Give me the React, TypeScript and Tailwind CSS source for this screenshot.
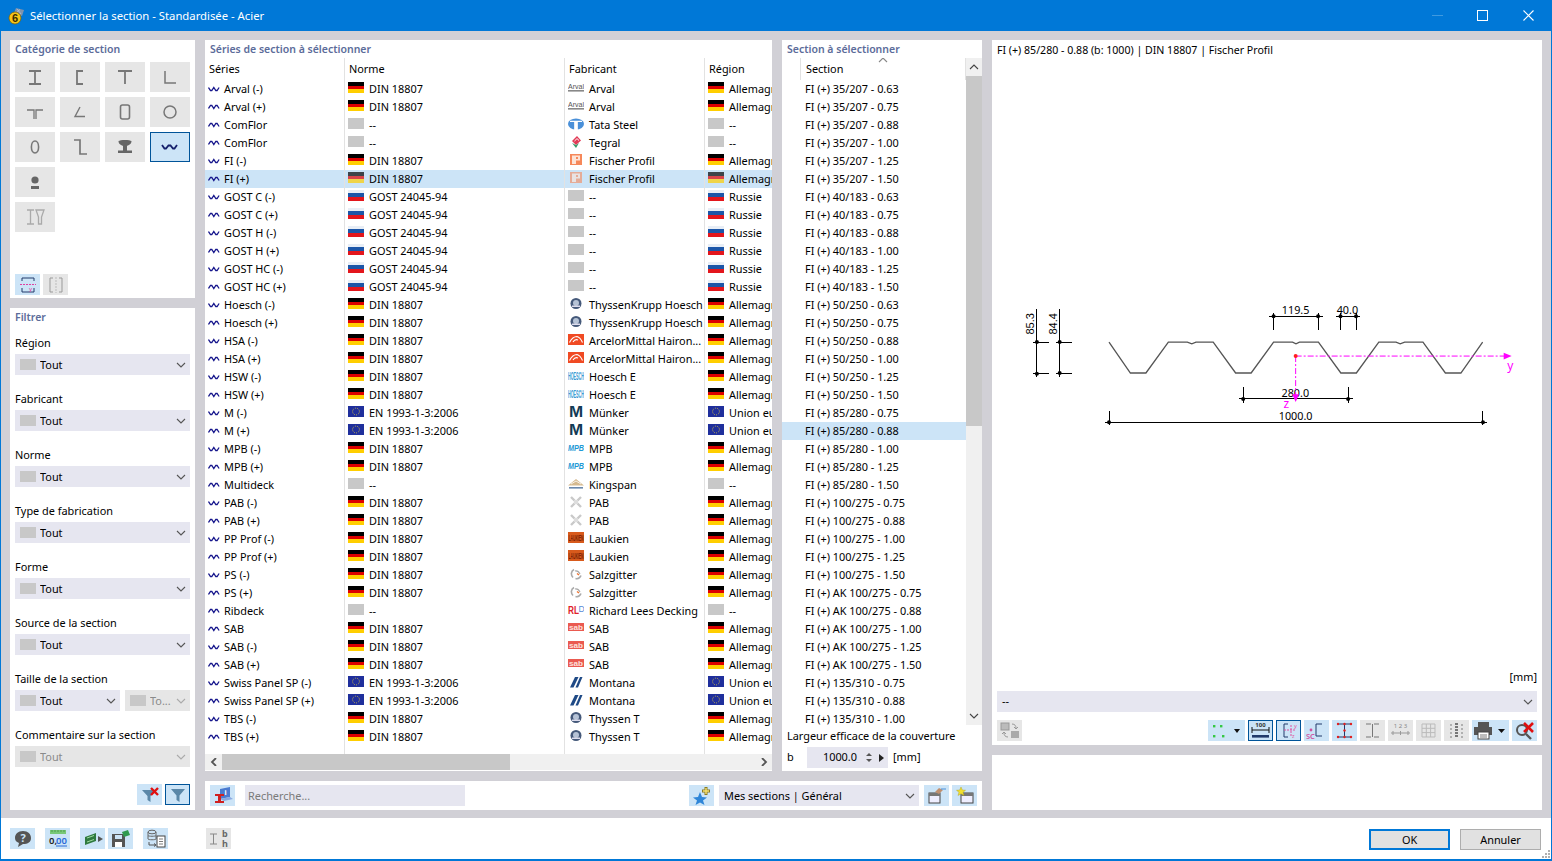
import React from 'react';

type FlagK = 'de' | 'ru' | 'eu' | 'no';
type Row = { n: string; w: 'm' | 'p'; norm: string; nf: FlagK; logo: string; fab: string; reg: string; rf: FlagK };

const DIN = 'DIN 18807', GOST = 'GOST 24045-94', EN = 'EN 1993-1-3:2006';
const pair = (n: string, norm: string, nf: FlagK, logo: string, fab: string, reg: string, rf: FlagK): Row[] => [
  { n: n + ' (-)', w: 'm', norm, nf, logo, fab, reg, rf },
  { n: n + ' (+)', w: 'p', norm, nf, logo, fab, reg, rf },
];
const one = (n: string, norm: string, nf: FlagK, logo: string, fab: string, reg: string, rf: FlagK): Row => ({ n, w: 'p', norm, nf, logo, fab, reg, rf });
const AL = 'Allemagne', RU = 'Russie', UE = 'Union européenne';
const rows: Row[] = [
  ...pair('Arval', DIN, 'de', 'arval', 'Arval', AL, 'de'),
  one('ComFlor', '--', 'no', 'tata', 'Tata Steel', '--', 'no'),
  one('ComFlor', '--', 'no', 'tegral', 'Tegral', '--', 'no'),
  ...pair('FI', DIN, 'de', 'fischer', 'Fischer Profil', AL, 'de'),
  ...pair('GOST C', GOST, 'ru', 'none', '--', RU, 'ru'),
  ...pair('GOST H', GOST, 'ru', 'none', '--', RU, 'ru'),
  ...pair('GOST HC', GOST, 'ru', 'none', '--', RU, 'ru'),
  ...pair('Hoesch', DIN, 'de', 'thyssen', 'ThyssenKrupp Hoesch', AL, 'de'),
  ...pair('HSA', DIN, 'de', 'arcelor', 'ArcelorMittal Hairon...', AL, 'de'),
  ...pair('HSW', DIN, 'de', 'hoesch', 'Hoesch E', AL, 'de'),
  ...pair('M', EN, 'eu', 'munker', 'Münker', UE, 'eu'),
  ...pair('MPB', DIN, 'de', 'mpb', 'MPB', AL, 'de'),
  one('Multideck', '--', 'no', 'kingspan', 'Kingspan', '--', 'no'),
  ...pair('PAB', DIN, 'de', 'pab', 'PAB', AL, 'de'),
  ...pair('PP Prof', DIN, 'de', 'laukien', 'Laukien', AL, 'de'),
  ...pair('PS', DIN, 'de', 'salz', 'Salzgitter', AL, 'de'),
  one('Ribdeck', '--', 'no', 'rld', 'Richard Lees Decking', '--', 'no'),
  one('SAB', DIN, 'de', 'sab', 'SAB', AL, 'de'),
  ...pair('SAB', DIN, 'de', 'sab', 'SAB', AL, 'de'),
  ...pair('Swiss Panel SP', EN, 'eu', 'montana', 'Montana', UE, 'eu'),
  ...pair('TBS', DIN, 'de', 'thyssen', 'Thyssen T', AL, 'de'),
];

const th = ['0.63', '0.75', '0.88', '1.00', '1.25', '1.50'];
const th5 = th.slice(1);
const sections: string[] = [
  ...th.map((t) => `FI (+) 35/207 - ${t}`),
  ...th.map((t) => `FI (+) 40/183 - ${t}`),
  ...th.map((t) => `FI (+) 50/250 - ${t}`),
  ...th5.map((t) => `FI (+) 85/280 - ${t}`),
  ...th5.map((t) => `FI (+) 100/275 - ${t}`),
  ...th5.map((t) => `FI (+) AK 100/275 - ${t}`),
  ...th5.slice(0, 3).map((t) => `FI (+) 135/310 - ${t}`),
];

function Flag({ k }: { k: FlagK }) {
  if (k === 'de')
    return (
      <span className="flex flex-col w-4 h-[11px] shrink-0 mb-[3px]">
        <span className="h-1 bg-black" />
        <span className="h-[3px] bg-[#dd0000]" />
        <span className="h-1 bg-[#ffce00]" />
      </span>
    );
  if (k === 'ru')
    return (
      <span className="flex flex-col w-4 h-[11px] shrink-0 mb-[3px]">
        <span className="h-[3px] bg-[#e8eef6]" />
        <span className="h-1 bg-[#1c56a8]" />
        <span className="h-1 bg-[#e3161c]" />
      </span>
    );
  if (k === 'eu')
    return (
      <svg width="16" height="11" viewBox="0 0 16 11" className="shrink-0 mb-[3px]">
        <rect width="16" height="11" fill="#1f2f9c" />
        <circle cx="8" cy="5.5" r="3.4" fill="none" stroke="#c9b64a" strokeWidth="1" strokeDasharray="1 1.1" />
      </svg>
    );
  return <span className="block w-4 h-[11px] bg-[#c8c8c8] shrink-0 mb-[3px]" />;
}

function Logo({ k }: { k: string }) {
  const box = 'relative w-4 h-[12px] shrink-0 mb-[3px] flex items-center justify-center overflow-hidden';
  const svg = 'shrink-0 mb-[3px]';
  switch (k) {
    case 'arval':
      return (
        <svg width="16" height="12" viewBox="0 0 16 12" className={svg}>
          <text x="0" y="6.5" fontSize="6.5" fill="#555" fontFamily="Liberation Sans, sans-serif" textLength="16" lengthAdjust="spacingAndGlyphs">Arval</text>
          <rect y="8" width="16" height="1.6" fill="#888" />
        </svg>
      );
    case 'tata':
      return (
        <svg width="16" height="12" viewBox="0 0 16 12" className={svg}>
          <ellipse cx="8" cy="6" rx="8" ry="5.5" fill="#4a90d9" />
          <path d="M2 3.4H14M6.8 3.4V11.5H9.2V3.4" stroke="#fff" strokeWidth="1.2" fill="#fff" />
        </svg>
      );
    case 'tegral':
      return (
        <svg width="16" height="12" viewBox="0 0 16 12" className={svg}>
          <path d="M9 0L13 4.5L8 9L4 5Z" fill="#e23a56" />
          <path d="M4 7L8 9L11 7L8 12Z" fill="#3a9a6a" />
          <path d="M6.5 5L9 2.6L11 4.5" stroke="#fff" fill="none" />
        </svg>
      );
    case 'fischer':
      return (
        <svg width="16" height="12" viewBox="0 0 16 12" className={svg}>
          <rect x="2" width="12" height="11" fill="#f6885a" />
          <path d="M4 1.5H12V6.5H8V10H4ZM8 3V5H10V3Z" fill="#fde3d6" fillRule="evenodd" />
        </svg>
      );
    case 'thyssen':
      return (
        <svg width="16" height="12" viewBox="0 0 16 12" className={svg}>
          <circle cx="8" cy="5.5" r="5.5" fill="#45597a" />
          <circle cx="8" cy="5" r="3" fill="#b6c3d6" />
          <rect x="4" y="7.5" width="8" height="1.5" fill="#dde" />
        </svg>
      );
    case 'arcelor':
      return (
        <svg width="16" height="12" viewBox="0 0 16 12" className={svg}>
          <rect width="16" height="11" fill="#f04a23" />
          <path d="M1.5 8.5C4 3.5 7 2.5 9 2.5C11 3 13 5 14.5 8.5M5 8C6.5 5.5 8 5 10 6" stroke="#fff" strokeWidth="1.1" fill="none" />
        </svg>
      );
    case 'hoesch':
      return (
        <svg width="16" height="12" viewBox="0 0 16 12" className={svg}>
          <text x="0" y="9.5" fontSize="10" fontWeight="700" fill="#3a9ad4" fontFamily="Liberation Sans, sans-serif" textLength="16" lengthAdjust="spacingAndGlyphs">HOESCH</text>
        </svg>
      );
    case 'munker':
      return (
        <span className={box}>
          <span className="text-[17px] font-bold text-[#123a55] leading-none [font-family:'Liberation_Sans',sans-serif]">M</span>
        </span>
      );
    case 'mpb':
      return (
        <svg width="16" height="12" viewBox="0 0 16 12" className={svg}>
          <text x="0" y="8.5" fontSize="9.5" fontWeight="700" fontStyle="italic" fill="#1f9ad6" fontFamily="Liberation Sans, sans-serif" textLength="16" lengthAdjust="spacingAndGlyphs">MPB</text>
        </svg>
      );
    case 'kingspan':
      return (
        <svg width="16" height="12" viewBox="0 0 16 12" className={svg}>
          <path d="M0 7.5L5 3.5L8 1L11 3.5L16 7.5Z" fill="#d5b98e" />
          <path d="M3 6L8 3L13 6" stroke="#fff" strokeWidth=".8" fill="none" />
          <rect x="1" y="9" width="14" height="1.6" fill="#6b88ac" />
        </svg>
      );
    case 'pab':
      return (
        <svg width="16" height="12" viewBox="0 0 16 12" className={svg}>
          <path d="M3 1L13 11M13 1L3 11" stroke="#c9c9c9" strokeWidth="2.4" />
          <rect x="6" y="4" width="4" height="4" fill="#ddd" />
        </svg>
      );
    case 'laukien':
      return (
        <svg width="16" height="12" viewBox="0 0 16 12" className={svg}>
          <rect width="16" height="11" fill="#d85a1c" />
          <text x="0.5" y="9" fontSize="9" fontWeight="700" fill="#7a2205" fontFamily="Liberation Sans, sans-serif" textLength="15" lengthAdjust="spacingAndGlyphs">LAUKIEN</text>
        </svg>
      );
    case 'salz':
      return (
        <svg width="16" height="12" viewBox="0 0 16 12" className={svg}>
          <path d="M6 1.5C3 3 2.5 7 5 9.5M13 7.5C12 10 9.5 11 7.5 10.5" stroke="#aaa" strokeWidth="1.6" fill="none" />
          <path d="M7 3C9 2.5 11 4 12 6" stroke="#aaa" strokeWidth="1.2" fill="none" />
          <path d="M9 5.5L11 7" stroke="#f0702a" strokeWidth="1.4" />
        </svg>
      );
    case 'rld':
      return (
        <svg width="16" height="12" viewBox="0 0 16 12" className={svg}>
          <text x="0" y="9.5" fontSize="10.5" fontWeight="700" fill="#e0202a" fontFamily="Liberation Sans, sans-serif" textLength="11" lengthAdjust="spacingAndGlyphs">RL</text>
          <text x="10.5" y="8" fontSize="8.5" fill="#5a8ad8" fontFamily="Liberation Sans, sans-serif">D</text>
        </svg>
      );
    case 'sab':
      return (
        <svg width="16" height="12" viewBox="0 0 16 12" className={svg}>
          <rect y="1" width="16" height="8" fill="#ea5a50" />
          <text x="1" y="7.5" fontSize="7" fontWeight="700" fill="#fde0dc" fontFamily="Liberation Sans, sans-serif" textLength="14" lengthAdjust="spacingAndGlyphs">sab</text>
        </svg>
      );
    case 'montana':
      return (
        <svg width="16" height="12" viewBox="0 0 16 12" className={svg}>
          <path d="M2 11.5L7 1H10.5L5.5 11.5ZM7.5 11.5L12 1H14.5L10 11.5Z" fill="#1f4a86" />
        </svg>
      );
    default:
      return <span className="block w-4 h-[11px] bg-[#c8c8c8] shrink-0 mb-[3px]" />;
  }
}

function Wave({ p, color = '#16168c', w = 12, h = 6 }: { p: boolean; color?: string; w?: number; h?: number }) {
  const d = p ? 'M0.5 4.5L2.5 1.5H3.8L5.8 4.5L7.8 1.5H9.1L11.1 4.5' : 'M0.5 1.5L2.5 4.5H3.8L5.8 1.5L7.8 4.5H9.1L11.1 1.5';
  return (
    <svg width={w} height={h} viewBox="0 0 12 6" className="shrink-0">
      <path d={d} fill="none" stroke={color} strokeWidth="1.3" />
    </svg>
  );
}

function Chevron({ c = '#555', dir = 'down' }: { c?: string; dir?: 'down' | 'up' | 'left' | 'right' }) {
  const d = { down: 'M1 1L5 5L9 1', up: 'M1 5L5 1L9 5', left: 'M6 0L2 4L6 8', right: 'M2 0L6 4L2 8' }[dir];
  const v = dir === 'left' || dir === 'right';
  return (
    <svg width={v ? 8 : 10} height={v ? 8 : 6} viewBox={v ? '0 0 8 8' : '0 0 10 6'} className="shrink-0">
      <path d={d} fill="none" stroke={c} strokeWidth={v ? 1.8 : 1.1} />
    </svg>
  );
}

function Heading({ children }: { children: React.ReactNode }) {
  return <div className="h-[18px] flex items-center pl-[5px] pt-[2px] text-[#5c6c9a] font-semibold text-[10.5px]">{children}</div>;
}

function Select({ label = 'Tout', disabled, className = '' }: { label?: string; disabled?: boolean; className?: string }) {
  return (
    <div className={`h-[21px] flex items-center pl-[5px] pr-[4px] ${disabled ? 'bg-[#e6e6e6] text-[#8a8a8a]' : 'bg-[#e6e6f0] text-black'} ${className}`}>
      <span className="block w-4 h-[11px] bg-[#c8c8c8] shrink-0" />
      <span className="ml-[4px] flex-1 truncate pt-[2px]">{label}</span>
      <Chevron c={disabled ? '#aaa' : '#555'} />
    </div>
  );
}

function Btn({ children, state = 'on', w = 25, h = 21 }: { children?: React.ReactNode; state?: 'on' | 'off' | 'sel'; w?: number; h?: number }) {
  const cls = state === 'on' ? 'bg-[#cce4f7]' : state === 'sel' ? 'bg-[#cce4f7] border border-[#005499]' : 'bg-[#e6e6e6]';
  return (
    <div className={`flex items-center justify-center shrink-0 box-border ${cls}`} style={{ width: w, height: h }}>
      {children}
    </div>
  );
}

const S = '#777';
const catIcons: React.ReactNode[] = [
  <path d="M14 9H26M14 22H26M20 9V22" stroke={S} strokeWidth="1.8" fill="none" />,
  <path d="M23 9H17V22H23" stroke={S} strokeWidth="1.8" fill="none" />,
  <path d="M13 9H27M20 9V22" stroke={S} strokeWidth="1.8" fill="none" />,
  <path d="M15 9V21H26" stroke={S} strokeWidth="1.5" fill="none" />,
  <path d="M12 13H19V22M28 13H21V22" stroke={S} strokeWidth="1.3" fill="none" />,
  <path d="M20 10L15 19.5H25" stroke={S} strokeWidth="1.4" fill="none" />,
  <rect x="15.5" y="8" width="9" height="14" rx="2" stroke={S} strokeWidth="1.6" fill="none" />,
  <circle cx="20" cy="15" r="6" stroke={S} strokeWidth="1.5" fill="none" />,
  <ellipse cx="20" cy="15" rx="3.6" ry="6" stroke={S} strokeWidth="1.6" fill="none" />,
  <path d="M14 8H20V22H27" stroke={S} strokeWidth="1.7" fill="none" />,
  <path d="M13.5 9C15 7.5 25 7.5 26.5 9C26.5 12 24 13 22 14V18.5H27V21H13V18.5H18V14C16 13 13.5 12 13.5 9Z" fill="#666" />,
  <path d="M12 13L14.5 16.5H16L18.5 13.5H20.5L23 16.5H24.5L27 13" stroke="#16206c" strokeWidth="1.8" fill="none" />,
  <g><circle cx="20" cy="13" r="3.6" fill="#666" /><rect x="16" y="19" width="8" height="3" fill="#666" /></g>,
  <g fill="none" stroke="#aaa" strokeWidth="1.3"><path d="M12 8H19M12 22H19M15.5 8V22M21 8H29L26.5 15V22H23.5V15Z" /></g>,
];

function Cat({ i, sel, className = '' }: { i: number; sel?: boolean; className?: string }) {
  return (
    <div className={`w-10 h-[30px] box-border ${sel ? 'bg-[#cce4f7] border border-[#005499]' : 'bg-[#e6e6e6]'} ${className}`}>
      <svg width={sel ? 38 : 40} height={sel ? 28 : 30} viewBox={sel ? '1 1 38 28' : '0 0 40 30'}>{catIcons[i]}</svg>
    </div>
  );
}

function Dim() {
  const X = (z: number) => 1000 + z * 0.345 - 0.7 - 992;
  const Y = (z: number) => 290 + z * 0.332 - 60;
  const ln = (a: number, b: number, c: number, d: number, k: string) => (
    <line key={k} x1={X(a)} y1={Y(b)} x2={X(c)} y2={Y(d)} stroke="#000" strokeWidth="1" shapeRendering="crispEdges" />
  );
  const dot = (a: number, b: number) => <circle key={`d${a}-${b}`} cx={X(a)} cy={Y(b)} r="2" fill="#000" />;
  const period = [318, 157, 380, 250, 425, 250, 490, 157, 545, 157, 558, 162, 570, 157, 620, 157, 685, 250, 730, 250, 795, 157, 850, 157, 860, 162, 870, 157, 925, 157, 990, 250, 1035, 250, 1100, 157, 1150, 157, 1162, 162, 1175, 157, 1228, 157, 1293, 250, 1338, 250, 1401, 157];
  let pts = '';
  for (let i = 0; i < period.length; i += 2) pts += `${X(period[i])},${Y(period[i + 1])} `;
  const t = (s: string, x: number, y: number) => (
    <text key={s} x={X(x)} y={Y(y)} textAnchor="middle" dominantBaseline="central" fontSize="10.8" fill="#000">{s}</text>
  );
  return (
    <svg className="flex-1 w-full min-h-0" viewBox="0 0 550 610" style={{ fontFamily: "'Noto Sans', sans-serif" }}>
      <polyline points={pts} fill="none" stroke="#555" strokeWidth="1.3" />
      {ln(109, 58, 109, 262, 'a')}{ln(97, 157, 145, 157, 'b')}{ln(97, 252, 145, 252, 'c')}
      {ln(175, 58, 175, 262, 'd')}{ln(163, 157, 212, 157, 'e')}{ln(163, 250, 212, 250, 'f')}
      {dot(109, 157)}{dot(109, 252)}{dot(175, 157)}{dot(175, 250)}
      <text transform={`translate(${X(88)} ${Y(102)}) rotate(-90)`} textAnchor="middle" dominantBaseline="central" fontSize="11" style={{ fontFamily: "'Liberation Sans', sans-serif" }}>85.3</text>
      <text transform={`translate(${X(155)} ${Y(102)}) rotate(-90)`} textAnchor="middle" dominantBaseline="central" fontSize="11" style={{ fontFamily: "'Liberation Sans', sans-serif" }}>84.4</text>
      {ln(782, 79, 937, 79, 'g')}{ln(795, 68, 795, 120, 'h')}{ln(924, 68, 924, 120, 'i')}{dot(795, 79)}{dot(924, 79)}{t('119.5', 859, 58)}
      {ln(977, 79, 1045, 79, 'j')}{ln(989, 68, 989, 120, 'k')}{ln(1034, 68, 1034, 120, 'l')}{dot(989, 79)}{dot(1034, 79)}{t('40.0', 1009, 58)}
      {ln(695, 328, 1025, 328, 'm')}{ln(707, 291, 707, 340, 'n')}{ln(1011, 291, 1011, 340, 'o')}{dot(707, 328)}{dot(1011, 328)}{t('280.0', 858, 310)}
      {ln(305, 398, 1414, 398, 'p')}{ln(318, 363, 318, 408, 'q')}{ln(1402, 363, 1402, 408, 'r')}{dot(318, 398)}{dot(1402, 398)}{t('1000.0', 859, 379)}
      <line x1={X(859)} y1={Y(199)} x2={X(1465)} y2={Y(199)} stroke="#ff00ff" strokeDasharray="6 2 2 2" />
      <line x1={X(859)} y1={Y(199)} x2={X(859)} y2={Y(318)} stroke="#ff00ff" strokeDasharray="6 2 2 2" />
      <path d={`M${X(1462)} ${Y(189)}L${X(1485)} ${Y(199)}L${X(1462)} ${Y(209)}Z`} fill="#ff00ff" />
      <path d={`M${X(849)} ${Y(314)}L${X(869)} ${Y(314)}L${X(859)} ${Y(337)}Z`} fill="#ff00ff" />
      <circle cx={X(859)} cy={Y(199)} r="2" fill="#ff2020" />
      <text x={X(1481)} y={Y(228)} textAnchor="middle" dominantBaseline="central" fontSize="12" fill="#ff00ff">y</text>
      <text x={X(832)} y={Y(342)} textAnchor="middle" dominantBaseline="central" fontSize="12" fill="#ff00ff">z</text>
    </svg>
  );
}

export default function App() {
  const sep = 'border-r border-[#e2e2e2]';
  return (
    <div className="w-[1552px] h-[861px] flex flex-col bg-[#d1d0d6] border-x border-b-2 border-[#0078d7] box-border overflow-hidden text-[10.9px] text-black [font-family:'Noto_Sans',sans-serif]">
      {/* Title bar */}
      <div className="h-[31px] shrink-0 bg-[#0078d7] flex items-center text-white text-[11.3px] -mx-px">
        <svg width="18" height="18" viewBox="0 0 18 18" className="ml-[8px]">
          <path d="M8 1L16 3L14 9L6 6Z" fill="#7f93ad" />
          <path d="M9 2L13 7M12 2.5L8 6" stroke="#c8d4e2" strokeWidth=".6" />
          <circle cx="7" cy="11" r="6" fill="#f5c518" stroke="#7a5c00" strokeWidth=".7" />
          <text x="7" y="15" textAnchor="middle" fontSize="11" fontWeight="700" fill="#3a2a00" fontFamily="Liberation Sans, sans-serif">6</text>
        </svg>
        <span className="ml-[4px] pt-px">Sélectionner la section - Standardisée - Acier</span>
        <div className="ml-auto flex items-center">
          <div className="w-[11px] h-px bg-[#3f9ae0] mr-[34px]" />
          <div className="w-[11px] h-[11px] border border-white mr-[35px]" />
          <svg width="11" height="11" viewBox="0 0 11 11" className="mr-[18px]"><path d="M.5.5L10.5 10.5M10.5.5L.5 10.5" stroke="#fff" strokeWidth="1.1" /></svg>
        </div>
      </div>

      {/* Body */}
      <div className="flex-1 min-h-0 flex gap-[10px] pl-[9px] pr-[9px] pt-[9px] pb-2">
        {/* Left column */}
        <div className="w-[185px] shrink-0 flex flex-col gap-[10px]">
          <div className="h-[258px] shrink-0 bg-white flex flex-col">
            <Heading>Catégorie de section</Heading>
            <div className="grid grid-cols-[40px_40px_40px_40px] gap-[5px] pl-[5px] pt-[4px] content-start">
              {catIcons.map((_, i) => (
                <Cat key={i} i={i} sel={i === 11} className={i === 13 ? 'col-start-1' : ''} />
              ))}
            </div>
            <div className="mt-auto flex gap-[3px] pl-[5px] pb-[3px]">
              <Btn>
                <svg width="20" height="18" viewBox="0 0 20 18"><path d="M4 5V2H16V5M4 12V16H16V12" stroke="#223a6a" fill="none" /><path d="M2 8.5H18" stroke="#e040a0" strokeDasharray="2 1" /><text x="11" y="15" fontSize="6" fill="#e040a0">y</text></svg>
              </Btn>
              <Btn state="off">
                <svg width="20" height="18" viewBox="0 0 20 18"><path d="M7 2H4V16H7M13 2H16V16H13" stroke="#999" fill="none" /><path d="M10 1V17" stroke="#bbb" strokeDasharray="2 1" /></svg>
              </Btn>
            </div>
          </div>

          <div className="flex-1 bg-white flex flex-col">
            <Heading>Filtrer</Heading>
            <div className="flex flex-col gap-[15px] px-[5px] mt-[8px]">
              {['Région', 'Fabricant', 'Norme', 'Type de fabrication', 'Forme', 'Source de la section'].map((l) => (
                <div key={l}>
                  <div className="h-5 flex items-center pb-[2px]">{l}</div>
                  <Select />
                </div>
              ))}
              <div>
                <div className="h-5 flex items-center pb-[2px]">Taille de la section</div>
                <div className="flex gap-[5px]">
                  <Select className="w-[105px]" />
                  <Select className="w-[65px]" label="To..." disabled />
                </div>
              </div>
              <div>
                <div className="h-5 flex items-center pb-[2px]">Commentaire sur la section</div>
                <Select disabled />
              </div>
            </div>
            <div className="mt-auto flex justify-end gap-[3px] pr-[5px] pb-[5px]">
              <Btn>
                <svg width="22" height="18" viewBox="0 0 22 18"><path d="M3 4H17L11.5 10V16L8.5 14V10Z" fill="#5a87a8" /><path d="M12 2L19 9M19 2L12 9" stroke="#e01010" strokeWidth="2.4" /></svg>
              </Btn>
              <Btn state="sel">
                <svg width="18" height="16" viewBox="0 0 18 16"><path d="M2 2H16L10.5 8.5V15L7.5 13V8.5Z" fill="#5a87a8" /></svg>
              </Btn>
            </div>
          </div>
        </div>

        {/* Centre column */}
        <div className="w-[777px] shrink-0 flex flex-col gap-[10px]">
          <div className="flex-1 min-h-0 flex gap-[10px]">
            {/* Series table */}
            <div className="w-[567px] shrink-0 bg-white flex flex-col overflow-hidden">
              <Heading>Séries de section à sélectionner</Heading>
              <div className="flex-1 min-h-0 flex flex-col">
                <div className="h-[22px] shrink-0 flex">
                  <div className={`w-[140px] pl-[4px] flex items-center ${sep}`}>Séries</div>
                  <div className={`w-[220px] pl-[4px] flex items-center ${sep}`}>Norme</div>
                  <div className={`w-[140px] pl-[4px] flex items-center ${sep}`}>Fabricant</div>
                  <div className="flex-1 pl-[4px] flex items-center">Région</div>
                </div>
                {rows.map((r, i) => {
                  const sel = i === 5;
                  return (
                    <div key={i} className={`h-[18px] shrink-0 flex whitespace-nowrap ${sel ? 'bg-[#cce4f7]' : ''}`}>
                      <div className={`w-[140px] pl-[3px] flex items-center gap-[4px] ${sep}`}>
                        <Wave p={r.w === 'p'} />
                        <span>{r.n}</span>
                      </div>
                      <div className={`w-[220px] pl-[3px] flex items-center gap-[5px] ${sep}`}>
                        <span className={sel ? 'flex opacity-70' : 'flex'}><Flag k={r.nf} /></span>
                        <span>{r.norm}</span>
                      </div>
                      <div className={`w-[140px] pl-[3px] flex items-center gap-[5px] overflow-hidden ${sep}`}>
                        <span className={sel ? 'flex opacity-60' : 'flex'}><Logo k={r.logo} /></span>
                        <span>{r.fab}</span>
                      </div>
                      <div className="flex-1 pl-[3px] flex items-center gap-[5px] overflow-hidden">
                        <span className={sel ? 'flex opacity-70' : 'flex'}><Flag k={r.rf} /></span>
                        <span>{r.reg}</span>
                      </div>
                    </div>
                  );
                })}
                <div className="flex-1 flex">
                  <div className={`w-[140px] ${sep}`} />
                  <div className={`w-[220px] ${sep}`} />
                  <div className={`w-[140px] ${sep}`} />
                </div>
              </div>
              <div className="h-4 mb-px shrink-0 bg-[#f0f0f0] flex items-center">
                <div className="w-[17px] flex justify-center"><Chevron dir="left" c="#555" /></div>
                <div className="w-[288px] h-full bg-[#c8c8c8]" />
                <div className="ml-auto w-[17px] flex justify-center"><Chevron dir="right" c="#555" /></div>
              </div>
            </div>

            {/* Section list */}
            <div className="w-[200px] shrink-0 bg-white flex flex-col">
              <Heading>Section à sélectionner</Heading>
              <div className="h-[669px] shrink-0 flex overflow-hidden">
                <div className="w-[184px] shrink-0 flex flex-col">
                  <div className="h-[22px] shrink-0 flex relative">
                    <div className="w-[19px] border-r border-[#e2e2e2]" />
                    <div className="flex-1 border-r border-[#e2e2e2] pl-[5px] flex items-center">Section</div>
                    <div className="absolute left-[96px] top-[-1px]"><Chevron dir="up" c="#888" /></div>
                  </div>
                  {sections.map((s, i) => (
                    <div key={i} className={`h-[18px] shrink-0 pl-[23px] flex items-center whitespace-nowrap ${i === 19 ? 'bg-[#cce4f7]' : ''}`}>{s}</div>
                  ))}
                </div>
                <div className="w-4 h-[667px] shrink-0 bg-[#f0f0f0] flex flex-col">
                  <div className="h-[18px] flex items-center justify-center"><Chevron dir="up" c="#444" /></div>
                  <div className="h-[350px] bg-[#c8c8c8]" />
                  <div className="mt-auto h-[18px] flex items-center justify-center"><Chevron dir="down" c="#444" /></div>
                </div>
              </div>
              <div className="h-[18px] shrink-0 pl-[5px] flex items-center">Largeur efficace de la couverture</div>
              <div className="mt-[2px] h-[21px] shrink-0 flex items-center pl-[5px]">
                <span className="w-[20px]">b</span>
                <div className="w-[81px] h-full bg-[#e6e6f0] flex items-center">
                  <span className="w-[50px] text-right">1000.0</span>
                  <svg width="8" height="13" viewBox="0 0 8 13" className="ml-[8px]"><path d="M1 5L4 2L7 5Z" fill="#555" /><path d="M1 8L4 11L7 8Z" fill="#555" /></svg>
                  <svg width="5" height="8" viewBox="0 0 5 8" className="ml-[6px]"><path d="M0 0L5 4L0 8Z" fill="#222" /></svg>
                </div>
                <span className="ml-[5px]">[mm]</span>
              </div>
            </div>
          </div>

          {/* Search bar */}
          <div className="h-[29px] shrink-0 bg-white flex items-center pl-[5px] pr-[5px]">
            <Btn>
              <svg width="22" height="20" viewBox="0 0 22 20">
                <path d="M8 3L18 1V11L8 13Z" fill="#4a7ad0" />
                <path d="M8 13L12 15L21 13L18 11Z" fill="#8aa8e0" />
                <text x="12.5" y="8.5" fontSize="7" fontWeight="700" fill="#fff">i</text>
                <path d="M3 8H12V10H9V15H12V17H3V15H6V10H3Z" fill="#d02020" />
              </svg>
            </Btn>
            <div className="ml-[10px] w-[220px] h-[21px] bg-[#e6e6f0] flex items-center pl-[3px] pt-[2px] text-[#7a7a7a]">Recherche...</div>
            <div className="ml-auto flex items-center gap-[5px]">
              <Btn>
                <svg width="22" height="20" viewBox="0 0 22 20">
                  <path d="M9 6L11 11L16 11.5L12 14.5L13.5 19L9 16.5L4.5 19L6 14.5L2 11.5L7 11Z" fill="#2f86d8" />
                  <path d="M15 1V9M11 5H19" stroke="#8a7a20" strokeWidth="3" /><path d="M15 2V8M12 5H18" stroke="#f4e070" strokeWidth="1.4" />
                </svg>
              </Btn>
              <div className="w-[200px] h-[21px] bg-[#e6e6f0] flex items-center pl-[5px] pr-[4px]">
                <span className="flex-1 pt-[2px]">Mes sections | Général</span>
                <Chevron />
              </div>
              <div className="flex gap-[3px]">
                <Btn>
                  <svg width="20" height="19" viewBox="0 0 20 19"><rect x="2" y="7" width="11" height="10" fill="#eef" stroke="#444" /><rect x="2" y="7" width="11" height="3" fill="#777" /><path d="M8 6L12 2L16 4L12 8Z" fill="#c09070" /><path d="M14 3H19" stroke="#4a90d9" /></svg>
                </Btn>
                <Btn>
                  <svg width="20" height="19" viewBox="0 0 20 19"><rect x="6" y="7" width="12" height="10" fill="#eef" stroke="#444" /><rect x="6" y="7" width="12" height="3" fill="#777" /><path d="M6 1L7.3 4L10.5 4.3L8 6.3L9 9.5L6 7.8L3 9.5L4 6.3L1.5 4.3L4.7 4Z" fill="#f2e030" stroke="#a89a10" strokeWidth=".4" /></svg>
                </Btn>
              </div>
            </div>
          </div>
        </div>

        {/* Right column */}
        <div className="w-[550px] shrink-0 flex flex-col gap-[10px]">
          <div className="flex-1 min-h-0 bg-white flex flex-col">
            <div className="h-5 shrink-0 pl-[5px] pt-[2px] flex items-center text-[10.6px]">FI (+) 85/280 - 0.88 (b: 1000) | DIN 18807 | Fischer Profil</div>
            <Dim />
            <div className="h-[14px] shrink-0 flex items-center justify-end pr-[5px]">[mm]</div>
            <div className="mt-[7px] mx-[5px] h-[21px] shrink-0 bg-[#e6e6f0] flex items-center pl-[5px] pr-[4px]">
              <span className="flex-1">--</span>
              <Chevron />
            </div>
            <div className="mt-2 mb-1 mx-[5px] h-[21px] shrink-0 flex items-center">
              <Btn state="off">
                <svg width="22" height="19" viewBox="0 0 22 19"><rect x="2" y="2" width="8" height="7" fill="#bbb" stroke="#999" /><rect x="12" y="10" width="8" height="7" fill="#aaa" /><path d="M13 3C16 3 17 5 17 7M15 6L17 8L19 6M9 16C6 16 5 14 5 12M3 13L5 11L7 13" stroke="#999" fill="none" /></svg>
              </Btn>
              <div className="ml-auto flex gap-[3px]">
                <Btn w={37}>
                  <svg width="37" height="21" viewBox="0 0 37 21">
                    <g fill="#35c845"><rect x="5" y="5" width="2.4" height="2.4" /><rect x="12" y="5" width="2.4" height="2.4" /><rect x="5" y="15" width="2.4" height="2.4" /><rect x="14" y="15" width="2.4" height="2.4" /></g>
                    <path d="M26 9H32L29 13Z" fill="#111" />
                  </svg>
                </Btn>
                <Btn state="sel">
                  <svg width="23" height="19" viewBox="0 0 23 19"><text x="11.5" y="6" textAnchor="middle" fontSize="6" fontWeight="700" fill="#333">100</text><path d="M3 9H20M3 6V12M20 6V12" stroke="#111" /><rect x="3" y="14" width="17" height="2.6" fill="#223a6a" /></svg>
                </Btn>
                <Btn state="sel">
                  <svg width="23" height="19" viewBox="0 0 23 19"><path d="M11 3H7V16H11" stroke="#223a6a" fill="none" /><path d="M7 9H18M14 4V15" stroke="#e050a0" strokeDasharray="2 1" /><text x="17" y="7" fontSize="5.5" fill="#e050a0">y</text><text x="15" y="17" fontSize="5.5" fill="#e050a0">z</text></svg>
                </Btn>
                <Btn>
                  <svg width="25" height="21" viewBox="0 0 25 21"><path d="M18 4H12V16H18" stroke="#223a6a" fill="none" /><circle cx="7" cy="10" r="1.4" fill="#d050a0" /><text x="2" y="19" fontSize="7.5" fontWeight="600" fill="#d050a0">SC</text></svg>
                </Btn>
                <Btn>
                  <svg width="25" height="21" viewBox="0 0 25 21"><path d="M6 4H19M6 17H19M12.5 4V17" stroke="#223a6a" /><g fill="#e02020"><circle cx="6" cy="4" r="1.2" /><circle cx="19" cy="4" r="1.2" /><circle cx="12.5" cy="4" r="1.2" /><circle cx="6" cy="17" r="1.2" /><circle cx="19" cy="17" r="1.2" /><circle cx="12.5" cy="17" r="1.2" /><circle cx="12.5" cy="10.5" r="1.2" /></g></svg>
                </Btn>
                <Btn state="off">
                  <svg width="25" height="21" viewBox="0 0 25 21"><path d="M6 4H11M14 4H19M6 17H11M14 17H19M12.5 4V17" stroke="#777" /></svg>
                </Btn>
                <Btn state="off">
                  <svg width="25" height="21" viewBox="0 0 25 21"><text x="12.5" y="8" textAnchor="middle" fontSize="6" fill="#888">1 2 3</text><path d="M3 13H22M5 11V15M12.5 11V15M20 11V15" stroke="#999" /></svg>
                </Btn>
                <Btn state="off">
                  <svg width="25" height="21" viewBox="0 0 25 21"><path d="M6 4H19V17H6ZM6 8.3H19M6 12.6H19M10.3 4V17M14.6 4V17" stroke="#bbb" fill="none" /></svg>
                </Btn>
                <Btn state="off">
                  <svg width="25" height="21" viewBox="0 0 25 21"><path d="M12.5 3V18" stroke="#777" strokeWidth="3" strokeDasharray="2 1" /><path d="M7 4V18M18 4V18" stroke="#999" strokeWidth="1.4" strokeDasharray="2 2" /></svg>
                </Btn>
                <Btn w={37}>
                  <svg width="37" height="21" viewBox="0 0 37 21"><rect x="6" y="2" width="11" height="5" fill="#555" /><rect x="2" y="7" width="18" height="8" fill="#555" /><rect x="6" y="12" width="11" height="7" fill="#fff" stroke="#444" /><path d="M8 15H15M8 17H15" stroke="#444" strokeWidth=".7" /><path d="M26 9H33L29.5 13Z" fill="#111" /></svg>
                </Btn>
                <Btn>
                  <svg width="25" height="21" viewBox="0 0 25 21"><circle cx="10" cy="10" r="5" fill="none" stroke="#555" strokeWidth="2" /><path d="M14 14L19 19" stroke="#555" strokeWidth="2.4" /><path d="M12 3L21 12M21 3L12 12" stroke="#e01010" strokeWidth="2.6" /></svg>
                </Btn>
              </div>
            </div>
          </div>
          <div className="h-[55px] shrink-0 bg-white" />
        </div>
      </div>

      {/* Footer */}
      <div className="h-[41px] shrink-0 bg-white flex items-center pl-[9px] relative">
        <Btn>
          <svg width="20" height="18" viewBox="0 0 20 18"><path d="M10 1C15 1 18 4 18 8C18 12 15 14 10 14L5 17L6 13C3 12 2 10 2 8C2 4 5 1 10 1Z" fill="#555" /><text x="10" y="12" textAnchor="middle" fontSize="11" fontWeight="700" fill="#cce4f7">?</text></svg>
        </Btn>
        <div className="ml-[10px]"><Btn>
          <svg width="20" height="19" viewBox="0 0 20 19"><rect x="2" y="1" width="16" height="4" fill="#78c878" /><path d="M4 1V3M7 1V3M10 1V3M13 1V3M16 1V3" stroke="#3a8a3a" strokeWidth=".7" /><text x="1" y="15" fontSize="9.5" fontWeight="600" fill="#222">0,</text><text x="8" y="15" fontSize="9.5" fontWeight="600" fill="#2a6ad8">00</text><path d="M8 17H19" stroke="#2a6ad8" /></svg>
        </Btn></div>
        <div className="ml-[10px] flex gap-[3px]">
          <Btn>
            <svg width="22" height="18" viewBox="0 0 22 18"><path d="M3 7L14 3V11L3 15Z" fill="#2f7a3f" /><path d="M5 8L12 5.5M5 12L12 9.5" stroke="#a0dca0" /><path d="M16 6L21 9L16 12Z" fill="#555" /></svg>
          </Btn>
          <Btn>
            <svg width="22" height="19" viewBox="0 0 22 19"><path d="M2 5H13L15 7V18H2Z" fill="#555" /><rect x="5" y="6" width="7" height="4" fill="#cce4f7" /><rect x="5" y="13" width="7" height="5" fill="#fff" /><path d="M12 3L18 1L20 6L14 8Z" fill="#2f9a4f" /></svg>
          </Btn>
        </div>
        <div className="ml-[10px]"><Btn>
          <svg width="22" height="19" viewBox="0 0 22 19"><ellipse cx="7" cy="3" rx="4" ry="1.8" fill="none" stroke="#666" /><path d="M3 3V10C3 11 11 11 11 10V3M3 6.5C3 7.5 11 7.5 11 6.5" fill="none" stroke="#666" /><rect x="12" y="7" width="8" height="11" fill="#fff" stroke="#444" /><path d="M14 10H18M14 12.5H18M14 15H18" stroke="#444" strokeWidth=".7" /><path d="M4 13V16H10M9 14.5L11 16L9 17.5" stroke="#555" fill="none" /></svg>
        </Btn></div>
        <div className="ml-[38px]"><Btn state="off">
          <svg width="24" height="20" viewBox="0 0 24 20"><path d="M3 5H10M3 15H10M6.5 5V15" stroke="#888" /><text x="15" y="8" fontSize="9" fontWeight="700" fill="#666">b</text><text x="15" y="18" fontSize="9" fontWeight="700" fill="#666">h</text></svg>
        </Btn></div>
        <div className="ml-auto flex gap-[10px] pr-[10px] pt-px">
          <div className="w-[81px] h-[21px] bg-[#e1e1e1] border-2 border-[#0078d7] box-border flex items-center justify-center pt-[2px]">OK</div>
          <div className="w-[81px] h-[21px] bg-[#e1e1e1] border border-[#adadad] box-border flex items-center justify-center pt-[2px]">Annuler</div>
        </div>
        <svg width="10" height="10" viewBox="0 0 10 10" className="absolute right-0 bottom-0"><g fill="#b0b0b0"><rect x="7" y="1" width="2" height="2" /><rect x="4" y="4" width="2" height="2" /><rect x="7" y="4" width="2" height="2" /><rect x="1" y="7" width="2" height="2" /><rect x="4" y="7" width="2" height="2" /><rect x="7" y="7" width="2" height="2" /></g></svg>
      </div>
    </div>
  );
}
